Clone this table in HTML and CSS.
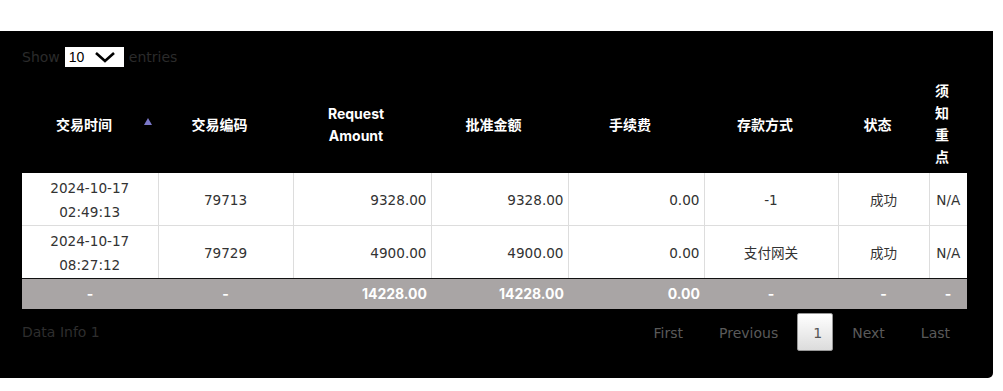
FILE: index.html
```html
<!DOCTYPE html>
<html lang="zh">
<head>
<meta charset="utf-8">
<link rel="stylesheet" href="styles.css">
</head>
<body>
<div class="page">
  <div class="panel">
    <div class="length">
      <span class="lbl">Show</span>
      <div class="select"><span>10</span><svg width="22" height="12" viewBox="0 0 22 12"><polyline points="2,2 11,10 20,2" fill="none" stroke="#000" stroke-width="2.6"/></svg></div>
      <span class="lbl">entries</span>
    </div>
    <table class="grid">
      <colgroup>
        <col style="width:136px"><col style="width:135px"><col style="width:138px"><col style="width:137px"><col style="width:136px"><col style="width:134px"><col style="width:91px"><col style="width:38px">
      </colgroup>
      <thead>
        <tr>
          <th class="sorted">交易时间<span class="arrow"></span></th>
          <th>交易编码</th>
          <th>Request Amount</th>
          <th>批准金额</th>
          <th>手续费</th>
          <th>存款方式</th>
          <th>状态</th>
          <th class="narrow">须知重点</th>
        </tr>
      </thead>
      <tbody>
        <tr>
          <td class="c">2024-10-17 02:49:13</td>
          <td class="c">79713</td>
          <td class="r">9328.00</td>
          <td class="r">9328.00</td>
          <td class="r">0.00</td>
          <td class="c">-1</td>
          <td class="c">成功</td>
          <td class="c">N/A</td>
        </tr>
        <tr>
          <td class="c">2024-10-17 08:27:12</td>
          <td class="c">79729</td>
          <td class="r">4900.00</td>
          <td class="r">4900.00</td>
          <td class="r">0.00</td>
          <td class="c">支付网关</td>
          <td class="c">成功</td>
          <td class="c">N/A</td>
        </tr>
      </tbody>
      <tfoot>
        <tr>
          <td class="c">-</td>
          <td class="c">-</td>
          <td class="r">14228.00</td>
          <td class="r">14228.00</td>
          <td class="r">0.00</td>
          <td class="c">-</td>
          <td class="c">-</td>
          <td class="c">-</td>
        </tr>
      </tfoot>
    </table>
    <div class="bottom">
      <div class="info">Data Info 1</div>
      <div class="pager">
        <span class="pg">First</span>
        <span class="pg">Previous</span>
        <span class="pg current">1</span>
        <span class="pg">Next</span>
        <span class="pg">Last</span>
      </div>
    </div>
  </div>
</div>
</body>
</html>
```

FILE: styles.css
```css
html, body {
  margin: 0;
  padding: 0;
  background: #fff;
}
.page {
  padding-top: 31px;
  width: 993px;
  font-family: "DejaVu Sans", "Noto Sans CJK SC", sans-serif;
}
.panel {
  background: #000;
  border-bottom-right-radius: 5px;
  padding: 16px 26px 26px 22px;
  height: 305px;
}
.length {
  display: flex;
  align-items: center;
  gap: 5px;
  height: 20px;
  font-size: 14px;
}
.lbl {
  color: #2b2b2b;
}
.select {
  width: 59px;
  height: 20px;
  background: #fff;
  display: flex;
  align-items: center;
  justify-content: space-between;
  padding: 0 8px 0 4px;
  box-sizing: border-box;
  font-size: 14px;
  color: #000;
  font-family: "Liberation Sans", Arial, sans-serif;
}
.grid {
  margin-top: 8px;
  width: 945px;
  border-collapse: collapse;
  table-layout: fixed;
}
.grid th {
  color: #fff;
  font-family: Inter, "Noto Sans CJK SC", sans-serif;
  font-weight: 700;
  font-size: 14px;
  line-height: 22px;
  padding: 6px 24px 4px 12px;
  text-align: center;
  vertical-align: middle;
  position: relative;
}
.grid th.narrow {
  padding: 5px 18px 5px 6px;
}
.arrow {
  position: absolute;
  right: 6px;
  top: 43px;
  width: 0;
  height: 0;
  border-left: 4px solid transparent;
  border-right: 4px solid transparent;
  border-bottom: 7px solid #7b78c9;
}
.grid tbody td {
  background: #fff;
  color: #333;
  font-size: 13.6px;
  line-height: 24px;
  padding: 3px 4px 1px;
  border-top: 1px solid #ddd;
  border-left: 1px solid #ddd;
  height: 48px;
}
.grid tbody tr:first-child td {
  border-top: none;
}
.grid tbody td:first-child {
  border-left: none;
}
.grid tbody tr:last-child td {
  border-bottom: 1px solid #111;
}
.grid tfoot td {
  background: #a9a5a5;
  color: #fff;
  font-family: Inter, sans-serif;
  font-weight: 700;
  font-size: 14px;
  line-height: 22px;
  padding: 4px 4px;
}
.c { text-align: center; }
.r { text-align: right; }
.bottom {
  display: flex;
  justify-content: space-between;
  align-items: center;
  margin-top: 4px;
  width: 945px;
}
.info {
  color: #2e2e2e;
  font-size: 14px;
}
.pager {
  display: flex;
  align-items: center;
}
.pg {
  color: #5a5a5a;
  font-size: 14px;
  line-height: 20px;
  padding: 9px 16px 7px;
  margin-left: 2px;
  border: 1px solid transparent;
}
.pg.current {
  color: #555;
  width: 4px;
  padding: 9px 15px 7px;
  text-align: center;
  background: linear-gradient(#fff, #dcdcdc);
  border: 1px solid #979797;
  border-radius: 2px;
  height: 20px;
}
```
